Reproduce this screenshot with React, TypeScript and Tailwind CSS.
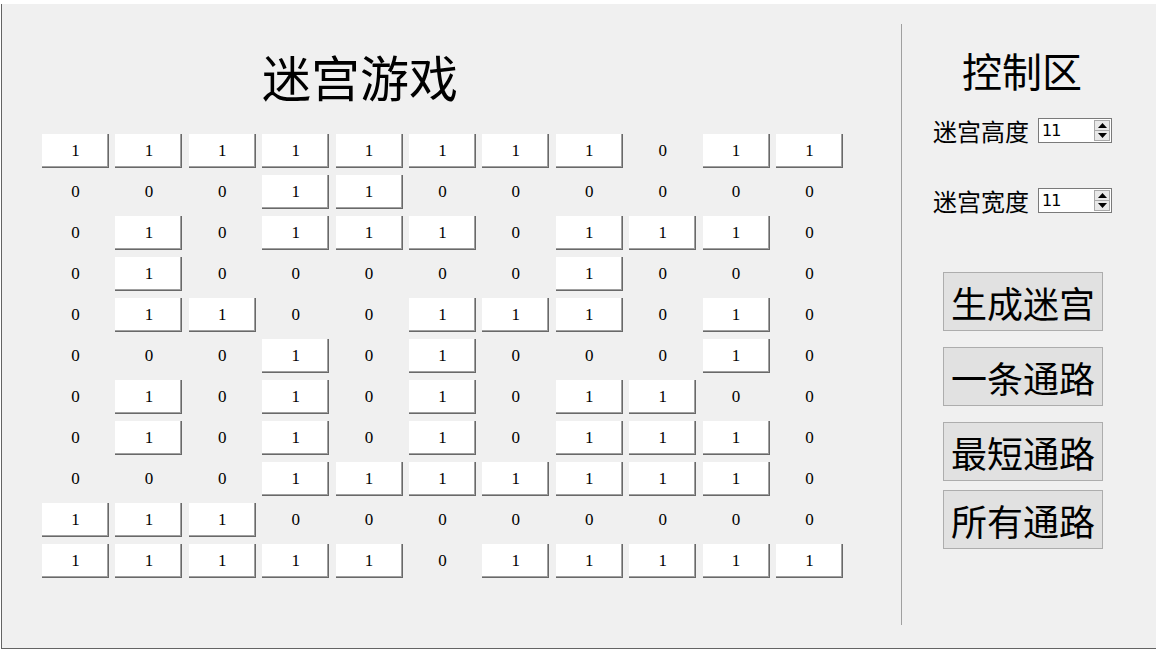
const maze: number[][] = [
  [1, 1, 1, 1, 1, 1, 1, 1, 0, 1, 1],
  [0, 0, 0, 1, 1, 0, 0, 0, 0, 0, 0],
  [0, 1, 0, 1, 1, 1, 0, 1, 1, 1, 0],
  [0, 1, 0, 0, 0, 0, 0, 1, 0, 0, 0],
  [0, 1, 1, 0, 0, 1, 1, 1, 0, 1, 0],
  [0, 0, 0, 1, 0, 1, 0, 0, 0, 1, 0],
  [0, 1, 0, 1, 0, 1, 0, 1, 1, 0, 0],
  [0, 1, 0, 1, 0, 1, 0, 1, 1, 1, 0],
  [0, 0, 0, 1, 1, 1, 1, 1, 1, 1, 0],
  [1, 1, 1, 0, 0, 0, 0, 0, 0, 0, 0],
  [1, 1, 1, 1, 1, 0, 1, 1, 1, 1, 1],
];

const cjk = "font-['SimSun','Noto_Sans_CJK_SC',sans-serif]";

function Cell({ v }: { v: number }) {
  if (v === 1) {
    return (
      <div className="h-[34px] flex items-center justify-center bg-white text-[17px] text-black font-['Liberation_Serif',serif] shadow-[inset_-1px_-1px_0_#696969,inset_-2px_-2px_0_#a0a0a0]">
        1
      </div>
    );
  }
  return (
    <div className="h-[34px] flex items-center justify-center text-[17px] text-black font-['Liberation_Serif',serif]">
      0
    </div>
  );
}

function SpinBox({ value }: { value: string }) {
  return (
    <div className="w-[74px] h-[25px] border border-[#7a7a7a] bg-white flex items-center pl-[3px] pr-[1px]">
      <span className="flex-1 text-[16px] leading-none text-black font-['DejaVu_Sans',sans-serif] tracking-[-1px]">{value}</span>
      <div className="flex flex-col w-[16px] h-[21px]">
        <div className="flex-1 flex items-center justify-center bg-[#e8e8e8] border border-[#a9a9a9]">
          <svg width="9" height="5" viewBox="0 0 9 5"><path d="M0 5 L4.5 0 L9 5 Z" fill="#000" /></svg>
        </div>
        <div className="flex-1 flex items-center justify-center bg-[#e8e8e8] border border-t-0 border-[#a9a9a9]">
          <svg width="9" height="5" viewBox="0 0 9 5"><path d="M0 0 L4.5 5 L9 0 Z" fill="#000" /></svg>
        </div>
      </div>
    </div>
  );
}

function ActionButton({ label, className }: { label: string; className: string }) {
  return (
    <button
      className={`ml-[41px] w-[160px] h-[59px] bg-[#e1e1e1] border border-[#adadad] text-[36px] leading-none text-black flex items-center justify-center ${cjk} ${className}`}
    >
      {label}
    </button>
  );
}

export default function App() {
  return (
    <div className="w-[1156px] h-[649px] bg-white pt-[4px] pl-[1px] overflow-hidden">
      <div className="h-[645px] bg-[#f0f0f0] border-l border-b border-[#646464] flex">
        <div className="w-[899px] flex flex-col">
          <h1 className={`mt-[47px] pl-[260px] text-[49px] leading-none font-normal text-black ${cjk}`}>迷宫游戏</h1>
          <div className="mt-[34px] ml-[40px] grid grid-cols-[repeat(11,67px)] gap-x-[6.4px] gap-y-[7px]">
            {maze.map((row, r) => row.map((v, c) => <Cell key={`${r}-${c}`} v={v} />))}
          </div>
        </div>
        <div className="mt-[20px] w-px h-[601px] bg-[#a0a0a0]" />
        <div className="flex-1 flex flex-col">
          <h2 className={`mt-[46px] pl-[60px] text-[40px] leading-none font-normal text-black ${cjk}`}>控制区</h2>
          <div className="mt-[28px] ml-[31px] flex items-center h-[25px]">
            <span className={`w-[105px] text-[24px] leading-none text-black ${cjk}`}>迷宫高度</span>
            <SpinBox value="11" />
          </div>
          <div className="mt-[45px] ml-[31px] flex items-center h-[25px]">
            <span className={`w-[105px] text-[24px] leading-none text-black ${cjk}`}>迷宫宽度</span>
            <SpinBox value="11" />
          </div>
          <ActionButton label="生成迷宫" className="mt-[59px]" />
          <ActionButton label="一条通路" className="mt-[16px]" />
          <ActionButton label="最短通路" className="mt-[16px]" />
          <ActionButton label="所有通路" className="mt-[9px]" />
        </div>
      </div>
    </div>
  );
}
